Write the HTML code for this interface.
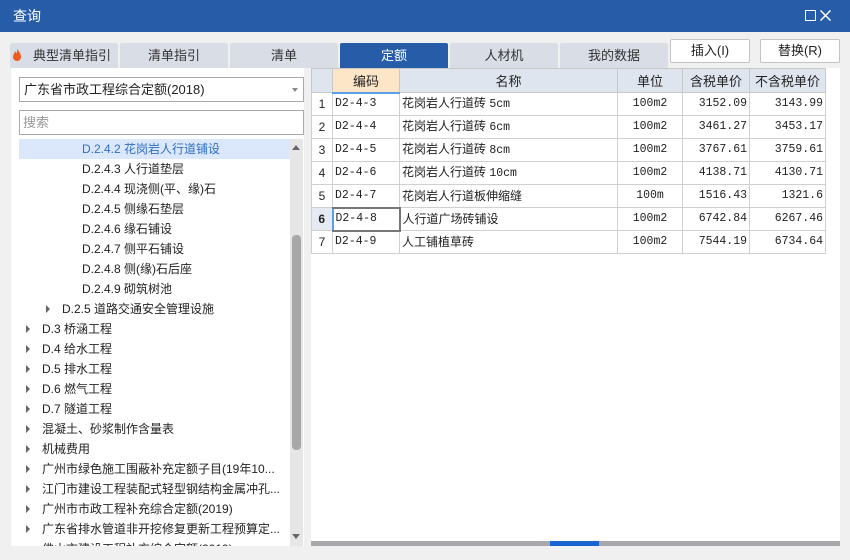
<!DOCTYPE html><html><head><meta charset="utf-8"><style>
*{margin:0;padding:0;box-sizing:border-box}
body{width:850px;height:560px;overflow:hidden;background:#f0f0f0;font-family:"Liberation Sans","Noto Sans CJK SC",sans-serif;font-size:12px;color:#222;position:relative}
.a{position:absolute}
.title{left:0;top:0;width:850px;height:32px;background:#265ca8;color:#fff;font-size:14px;line-height:32px;padding-left:13px}
.tab{top:43px;height:25px;background:#d8dde6;text-align:center;line-height:25px;font-size:13px;color:#333;border-radius:2px 2px 0 0}
.btn{top:39px;height:24px;background:#fff;border:1px solid #c4c4c4;border-radius:2px;text-align:center;line-height:22px;font-size:13px}
.tr{height:20px;line-height:20px;font-size:12px;white-space:nowrap}
.arr{width:0;height:0;border-left:4px solid #666;border-top:4px solid transparent;border-bottom:4px solid transparent}
table{border-collapse:collapse;table-layout:fixed}
td{border:1px solid #d0d0d0;height:23px;line-height:20px;white-space:nowrap;overflow:hidden;font-size:12px;padding:0 2px;vertical-align:middle}
.m{font-family:"Liberation Mono","Noto Sans CJK SC",monospace;font-size:11.5px}
th{background:#dfe5ef;border:1px solid #c8c8c8;font-weight:normal;font-size:13px;height:24px}
</style></head><body>
<div class="a title">查询</div>
<div class="a" style="left:805px;top:10px;width:11px;height:11px;border:1.5px solid #fff"></div>
<svg class="a" style="left:820px;top:10px" width="11" height="11"><path d="M0.5 0.5L10.5 10.5M10.5 0.5L0.5 10.5" stroke="#fff" stroke-width="1.5"/></svg>
<div class="a tab" style="left:10px;width:108px;padding-left:16px">典型清单指引</div>
<svg class="a" style="left:12px;top:48px" width="10" height="14"><path d="M5 0C6 3 9 5 9 9A4 4 0 0 1 1 9C1 6 3 5 3 3C4 4 4 5 4.5 5.5C5 4 5.5 2 5 0Z" fill="#f05a20"/></svg>
<div class="a tab" style="left:120px;width:108px">清单指引</div>
<div class="a tab" style="left:230px;width:108px">清单</div>
<div class="a tab" style="left:340px;width:108px;background:#265ca8;color:#fff">定额</div>
<div class="a tab" style="left:450px;width:108px">人材机</div>
<div class="a tab" style="left:560px;width:108px">我的数据</div>
<div class="a btn" style="left:670px;width:80px">插入(I)</div>
<div class="a btn" style="left:760px;width:80px">替换(R)</div>

<div class="a" style="left:11px;top:68px;width:293px;height:478px;background:#fff;overflow:hidden">
 <div class="a" style="left:8px;top:9px;width:285px;height:25px;border:1px solid #aaa;line-height:23px;padding-left:4px;font-size:13px">广东省市政工程综合定额(2018)</div>
 <div class="a" style="left:281px;top:20px;border-top:4px solid #888;border-left:3px solid transparent;border-right:3px solid transparent"></div>
 <div class="a" style="left:8px;top:42px;width:285px;height:25px;border:1px solid #aaa;line-height:23px;padding-left:3px;font-size:13px;color:#999">搜索</div>
 <div class="a" style="left:8px;top:71px;width:271px;height:20px;background:#dbe8fb"></div>
 <div class="a" style="left:8px;top:71px;width:271px">
  <div class="tr" style="padding-left:63px;color:#2f6fc4">D.2.4.2 花岗岩人行道铺设</div>
  <div class="tr" style="padding-left:63px">D.2.4.3 人行道垫层</div>
  <div class="tr" style="padding-left:63px">D.2.4.4 现浇侧(平、缘)石</div>
  <div class="tr" style="padding-left:63px">D.2.4.5 侧缘石垫层</div>
  <div class="tr" style="padding-left:63px">D.2.4.6 缘石铺设</div>
  <div class="tr" style="padding-left:63px">D.2.4.7 侧平石铺设</div>
  <div class="tr" style="padding-left:63px">D.2.4.8 侧(缘)石后座</div>
  <div class="tr" style="padding-left:63px">D.2.4.9 砌筑树池</div>
  <div class="tr" style="padding-left:43px">D.2.5 道路交通安全管理设施</div>
  <div class="tr" style="padding-left:23px">D.3 桥涵工程</div>
  <div class="tr" style="padding-left:23px">D.4 给水工程</div>
  <div class="tr" style="padding-left:23px">D.5 排水工程</div>
  <div class="tr" style="padding-left:23px">D.6 燃气工程</div>
  <div class="tr" style="padding-left:23px">D.7 隧道工程</div>
  <div class="tr" style="padding-left:23px">混凝土、砂浆制作含量表</div>
  <div class="tr" style="padding-left:23px">机械费用</div>
  <div class="tr" style="padding-left:23px">广州市绿色施工围蔽补充定额子目(19年10...</div>
  <div class="tr" style="padding-left:23px">江门市建设工程装配式轻型钢结构金属冲孔...</div>
  <div class="tr" style="padding-left:23px">广州市市政工程补充综合定额(2019)</div>
  <div class="tr" style="padding-left:23px">广东省排水管道非开挖修复更新工程预算定...</div>
  <div class="tr" style="padding-left:23px">佛山市建设工程补充综合定额(2019)</div>
 </div>
 <div class="a arr" style="left:35px;top:237px"></div>
 <div class="a arr" style="left:15px;top:257px"></div><div class="a arr" style="left:15px;top:277px"></div>
 <div class="a arr" style="left:15px;top:297px"></div><div class="a arr" style="left:15px;top:317px"></div>
 <div class="a arr" style="left:15px;top:337px"></div><div class="a arr" style="left:15px;top:357px"></div>
 <div class="a arr" style="left:15px;top:377px"></div><div class="a arr" style="left:15px;top:397px"></div>
 <div class="a arr" style="left:15px;top:417px"></div><div class="a arr" style="left:15px;top:437px"></div>
 <div class="a arr" style="left:15px;top:457px"></div>
 <div class="a" style="left:279px;top:71px;width:13px;height:407px;background:#e6e6e6"></div>
 <div class="a" style="left:281px;top:77px;border-bottom:5px solid #666;border-left:4px solid transparent;border-right:4px solid transparent"></div>
 <div class="a" style="left:281px;top:466px;border-top:5px solid #666;border-left:4px solid transparent;border-right:4px solid transparent"></div>
 <div class="a" style="left:281px;top:167px;width:9px;height:215px;background:#a8a8a8;border-radius:4px"></div>
</div>

<div class="a" style="left:311px;top:68px;width:529px;height:478px;background:#fff;overflow:hidden">
<table class="a" style="left:0;top:0;width:514px">
<colgroup><col style="width:21px"><col style="width:67px"><col style="width:218px"><col style="width:65px"><col style="width:67px"><col style="width:76px"></colgroup>
<tr><th></th><th style="background:#fde6c8;border-bottom:2px solid #5a9ee8">编码</th><th>名称</th><th>单位</th><th>含税单价</th><th>不含税单价</th></tr>
<tr><td style="text-align:center">1</td><td class="m">D2-4-3</td><td>花岗岩人行道砖 <span class="m">5cm</span></td><td class="m" style="text-align:center">100m2</td><td class="m" style="text-align:right">3152.09</td><td class="m" style="text-align:right">3143.99</td></tr>
<tr><td style="text-align:center">2</td><td class="m">D2-4-4</td><td>花岗岩人行道砖 <span class="m">6cm</span></td><td class="m" style="text-align:center">100m2</td><td class="m" style="text-align:right">3461.27</td><td class="m" style="text-align:right">3453.17</td></tr>
<tr><td style="text-align:center">3</td><td class="m">D2-4-5</td><td>花岗岩人行道砖 <span class="m">8cm</span></td><td class="m" style="text-align:center">100m2</td><td class="m" style="text-align:right">3767.61</td><td class="m" style="text-align:right">3759.61</td></tr>
<tr><td style="text-align:center">4</td><td class="m">D2-4-6</td><td>花岗岩人行道砖 <span class="m">10cm</span></td><td class="m" style="text-align:center">100m2</td><td class="m" style="text-align:right">4138.71</td><td class="m" style="text-align:right">4130.71</td></tr>
<tr><td style="text-align:center">5</td><td class="m">D2-4-7</td><td>花岗岩人行道板伸缩缝</td><td class="m" style="text-align:center">100m</td><td class="m" style="text-align:right">1516.43</td><td class="m" style="text-align:right">1321.6</td></tr>
<tr><td style="text-align:center;font-weight:bold;background:#e6ebf3">6</td><td class="m" style="border:2px solid #777;border-left:2px solid #5a9ee8">D2-4-8</td><td>人行道广场砖铺设</td><td class="m" style="text-align:center">100m2</td><td class="m" style="text-align:right">6742.84</td><td class="m" style="text-align:right">6267.46</td></tr>
<tr><td style="text-align:center">7</td><td class="m">D2-4-9</td><td>人工铺植草砖</td><td class="m" style="text-align:center">100m2</td><td class="m" style="text-align:right">7544.19</td><td class="m" style="text-align:right">6734.64</td></tr>
</table>
<div class="a" style="left:0;top:473px;width:529px;height:5px;background:#a8a8ac"></div>
<div class="a" style="left:239px;top:473px;width:49px;height:5px;background:#1a64d0"></div>
</div>
</body></html>
